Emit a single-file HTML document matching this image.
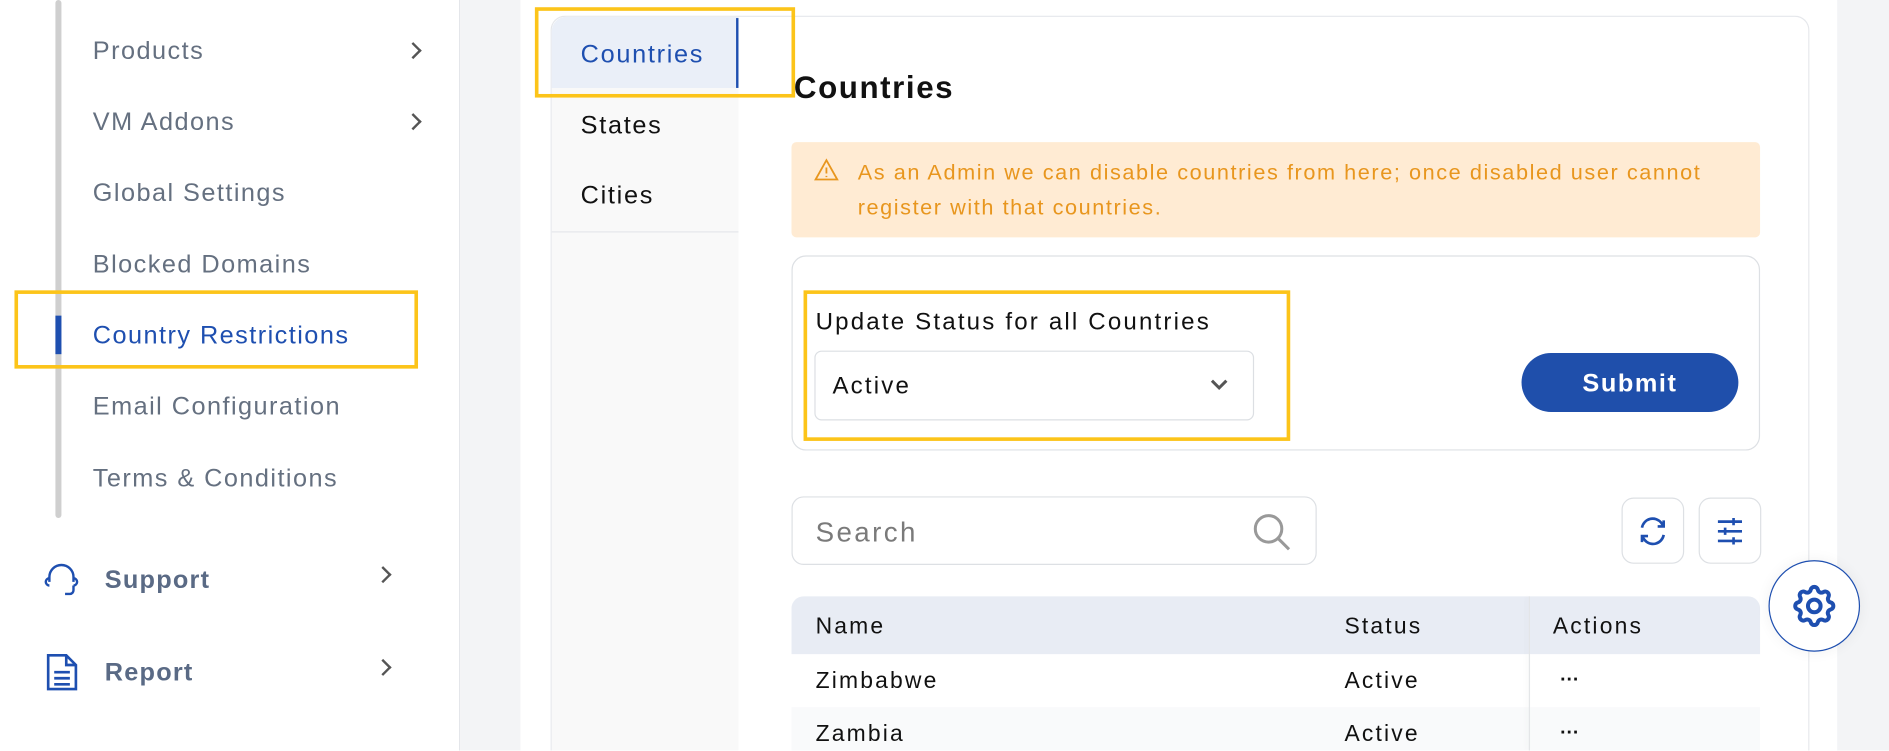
<!DOCTYPE html>
<html><head><meta charset="utf-8"><style>
html,body{margin:0;padding:0;width:1889px;height:751px;overflow:hidden;background:#fff;font-family:"Liberation Sans",sans-serif}
#w{position:absolute;left:0;top:0;width:1568px;height:623px;transform:scale(1.2047);transform-origin:0 0;overflow:hidden}
.a{position:absolute;white-space:nowrap}
.mi{position:absolute;left:77px;font-size:21px;letter-spacing:1.2px;color:#657080;transform:translateY(-50%)}
.chev{position:absolute;width:8px;height:8px;border-right:2px solid #555;border-top:2px solid #555;transform:rotate(45deg)}
.yb{position:absolute;border:3px solid #fcc419;box-sizing:border-box}
.c{transform:translateY(-50%)}
.t{font-size:19px;color:#111;letter-spacing:1.8px}
</style></head><body><div id="w">
<div class="a" style="left:0;top:0;width:381px;height:623px;background:#fff;border-right:1px solid #e4e6ea"></div>
<div class="a" style="left:46px;top:0;width:5px;height:430px;background:#cfcfcf;border-radius:3px"></div>
<div class="a" style="left:46px;top:262px;width:5px;height:32px;background:#1e4fb0"></div>
<div class="mi" style="top:43px">Products</div><div class="chev" style="left:338px;top:37px"></div>
<div class="mi" style="top:102px">VM Addons</div><div class="chev" style="left:338px;top:96px"></div>
<div class="mi" style="top:161px">Global Settings</div>
<div class="mi" style="top:220px">Blocked Domains</div>
<div class="mi" style="top:279px;color:#1e4fb0">Country Restrictions</div>
<div class="mi" style="top:338px">Email Configuration</div>
<div class="mi" style="top:398px">Terms &amp; Conditions</div>
<div class="yb" style="left:12px;top:241px;width:335px;height:65px"></div>
<svg class="a" style="left:34px;top:465px" width="34" height="34" viewBox="0 0 34 34" fill="none" stroke="#1e4fb0" stroke-width="2"><path d="M7 18V14a10 10 0 0 1 20 0v4"/><path d="M7 15a3 3 0 0 0 0 6"/><path d="M27 15a3 3 0 0 1 0 6"/><path d="M27 21v4a3 3 0 0 1-3 3h-4"/></svg>
<div class="a c" style="left:87px;top:482px;font-size:21px;letter-spacing:1px;color:#5a6a85;font-weight:bold">Support</div>
<div class="chev" style="left:313px;top:472px"></div>
<svg class="a" style="left:36px;top:540px" width="32" height="36" viewBox="0 0 32 36" fill="none" stroke="#1e4fb0" stroke-width="2.2"><path d="M4 4h15l8 8v20H4z"/><path d="M19 4v8h8"/><path d="M9 18h13M9 23h13M9 28h13"/></svg>
<div class="a c" style="left:87px;top:559px;font-size:21px;letter-spacing:1px;color:#5a6a85;font-weight:bold">Report</div>
<div class="chev" style="left:313px;top:549px"></div>
<div class="a" style="left:382px;top:0;width:1186px;height:623px;background:#f3f4f6"></div>
<div class="a" style="left:432px;top:0;width:1093px;height:623px;background:#fff"></div>
<div class="a" style="left:457px;top:13px;width:1043px;height:610px;border:1px solid #e5e7eb;border-bottom:0;border-radius:12px 12px 0 0;background:#fff"></div>
<div class="a" style="left:458px;top:14px;width:155px;height:609px;background:#f9f9f9;border-top-left-radius:12px"></div>
<div class="a" style="left:458px;top:14px;width:155px;height:59px;background:#eaeff8;border-top-left-radius:12px"></div>
<div class="a" style="left:611px;top:15px;width:2px;height:58px;background:#1e4fb0"></div>
<div class="a" style="left:458px;top:192px;width:155px;height:1px;background:#e5e7eb"></div>
<div class="a c" style="left:482px;top:46px;font-size:21px;letter-spacing:1.4px;color:#1e4fb0">Countries</div>
<div class="a c" style="left:482px;top:105px;font-size:21px;letter-spacing:1.4px;color:#111">States</div>
<div class="a c" style="left:482px;top:163px;font-size:21px;letter-spacing:1.4px;color:#111">Cities</div>
<div class="yb" style="left:444px;top:6px;width:216px;height:75px"></div>
<div class="a c" style="left:659px;top:73px;font-size:26px;letter-spacing:1.3px;font-weight:bold;color:#111">Countries</div>
<div class="a" style="left:657px;top:118px;width:804px;height:79px;background:#ffebd3;border-radius:4px"></div>
<svg class="a" style="left:675px;top:131px" width="22" height="20" viewBox="0 0 22 20" fill="none" stroke="#e8961e" stroke-width="1.5"><path d="M11 2L20 18H2z"/><path d="M11 8v5M11 15v1"/></svg>
<div class="a" style="left:712px;top:129px;font-size:18px;letter-spacing:1.3px;color:#e8961e;line-height:29px">As an Admin we can disable countries from here; once disabled user cannot<br>register with that countries.</div>
<div class="a" style="left:657px;top:212px;width:804px;height:162px;border:1px solid #dde0e4;border-radius:12px;box-sizing:border-box"></div>
<div class="yb" style="left:667px;top:241px;width:404px;height:125px"></div>
<div class="a c t" style="left:677px;top:268px;font-size:20px">Update Status for all Countries</div>
<div class="a" style="left:676px;top:291px;width:365px;height:58px;border:1px solid #dcdfe3;border-radius:6px;box-sizing:border-box"></div>
<div class="a c t" style="left:691px;top:321px;font-size:20px">Active</div>
<svg class="a" style="left:1003px;top:313px" width="18" height="12" viewBox="0 0 18 12" fill="none" stroke="#555" stroke-width="2.5"><path d="M3 3l6 6 6-6"/></svg>
<div class="a" style="left:1263px;top:293px;width:180px;height:49px;background:#1f4fab;border-radius:25px;color:#fff;font-weight:bold;font-size:21px;letter-spacing:1.3px;text-align:center;line-height:51px">Submit</div>
<div class="a" style="left:657px;top:412px;width:436px;height:57px;border:1px solid #dde0e4;border-radius:10px;box-sizing:border-box"></div>
<div class="a c" style="left:677px;top:442px;font-size:23px;letter-spacing:2px;color:#7a7a7a">Search</div>
<svg class="a" style="left:1038px;top:424px" width="36" height="36" viewBox="0 0 36 36" fill="none" stroke="#999" stroke-width="2.5"><circle cx="15" cy="15" r="11"/><path d="M23 23l9 9"/></svg>
<div class="a" style="left:1346px;top:413px;width:52px;height:55px;border:1px solid #dde0e4;border-radius:10px;box-sizing:border-box"></div>
<svg class="a" style="left:1358px;top:427px" width="28" height="28" viewBox="0 0 28 28" fill="none" stroke="#1e4fb0" stroke-width="2.2"><path d="M5 11a9 9 0 0 1 16-4l2 3"/><path d="M23 17a9 9 0 0 1-16 4l-2-3"/><path d="M23 5v5h-5M5 23v-5h5"/></svg>
<div class="a" style="left:1410px;top:413px;width:52px;height:55px;border:1px solid #dde0e4;border-radius:10px;box-sizing:border-box"></div>
<svg class="a" style="left:1422px;top:427px" width="28" height="28" viewBox="0 0 28 28" fill="none" stroke="#1e4fb0" stroke-width="2.2"><path d="M4 6h20M4 14h20M4 22h20"/><path d="M17 3v6M10 11v6M17 19v6"/></svg>
<div class="a" style="left:657px;top:495px;width:804px;height:48px;background:#e8ecf4;border-radius:10px 10px 0 0"></div>
<div class="a" style="left:657px;top:587px;width:804px;height:36px;background:#f9fafb"></div>
<div class="a" style="left:1269px;top:495px;width:1px;height:128px;background:#e3e5e8;box-shadow:-2px 0 4px rgba(0,0,0,.06)"></div>
<div class="a c t" style="left:677px;top:521px">Name</div>
<div class="a c t" style="left:1116px;top:521px">Status</div>
<div class="a c t" style="left:1289px;top:521px">Actions</div>
<div class="a c t" style="left:677px;top:566px">Zimbabwe</div>
<div class="a c t" style="left:1116px;top:566px">Active</div>
<div class="a c" style="left:1295px;top:565px;font-size:16px;font-weight:bold;color:#111">···</div>
<div class="a c t" style="left:677px;top:610px">Zambia</div>
<div class="a c t" style="left:1116px;top:610px">Active</div>
<div class="a c" style="left:1295px;top:609px;font-size:16px;font-weight:bold;color:#111">···</div>
<div class="a" style="left:1468px;top:465px;width:76px;height:76px;border:1px solid #1e4fb0;border-radius:50%;background:#fff;box-sizing:border-box;box-shadow:0 0 12px rgba(0,0,0,.06)"></div>
<svg class="a" style="left:1485px;top:482px" width="42" height="42" viewBox="0 0 24 24" fill="none" stroke="#1e4fb0" stroke-width="1.9"><path d="M10.3 4.3c.4-1.8 3-1.8 3.4 0a1.7 1.7 0 0 0 2.6 1.1c1.5-.9 3.3.8 2.4 2.4a1.7 1.7 0 0 0 1 2.5c1.8.4 1.8 3 0 3.4a1.7 1.7 0 0 0-1 2.6c.9 1.5-.9 3.3-2.4 2.4a1.7 1.7 0 0 0-2.6 1c-.4 1.8-3 1.8-3.4 0a1.7 1.7 0 0 0-2.6-1c-1.5.9-3.3-.9-2.4-2.4a1.7 1.7 0 0 0-1-2.6c-1.8-.4-1.8-3 0-3.4a1.7 1.7 0 0 0 1-2.5c-.9-1.6.9-3.3 2.4-2.4a1.7 1.7 0 0 0 2.6-1.1z"/><circle cx="12" cy="12" r="3"/></svg>
</div></body></html>
